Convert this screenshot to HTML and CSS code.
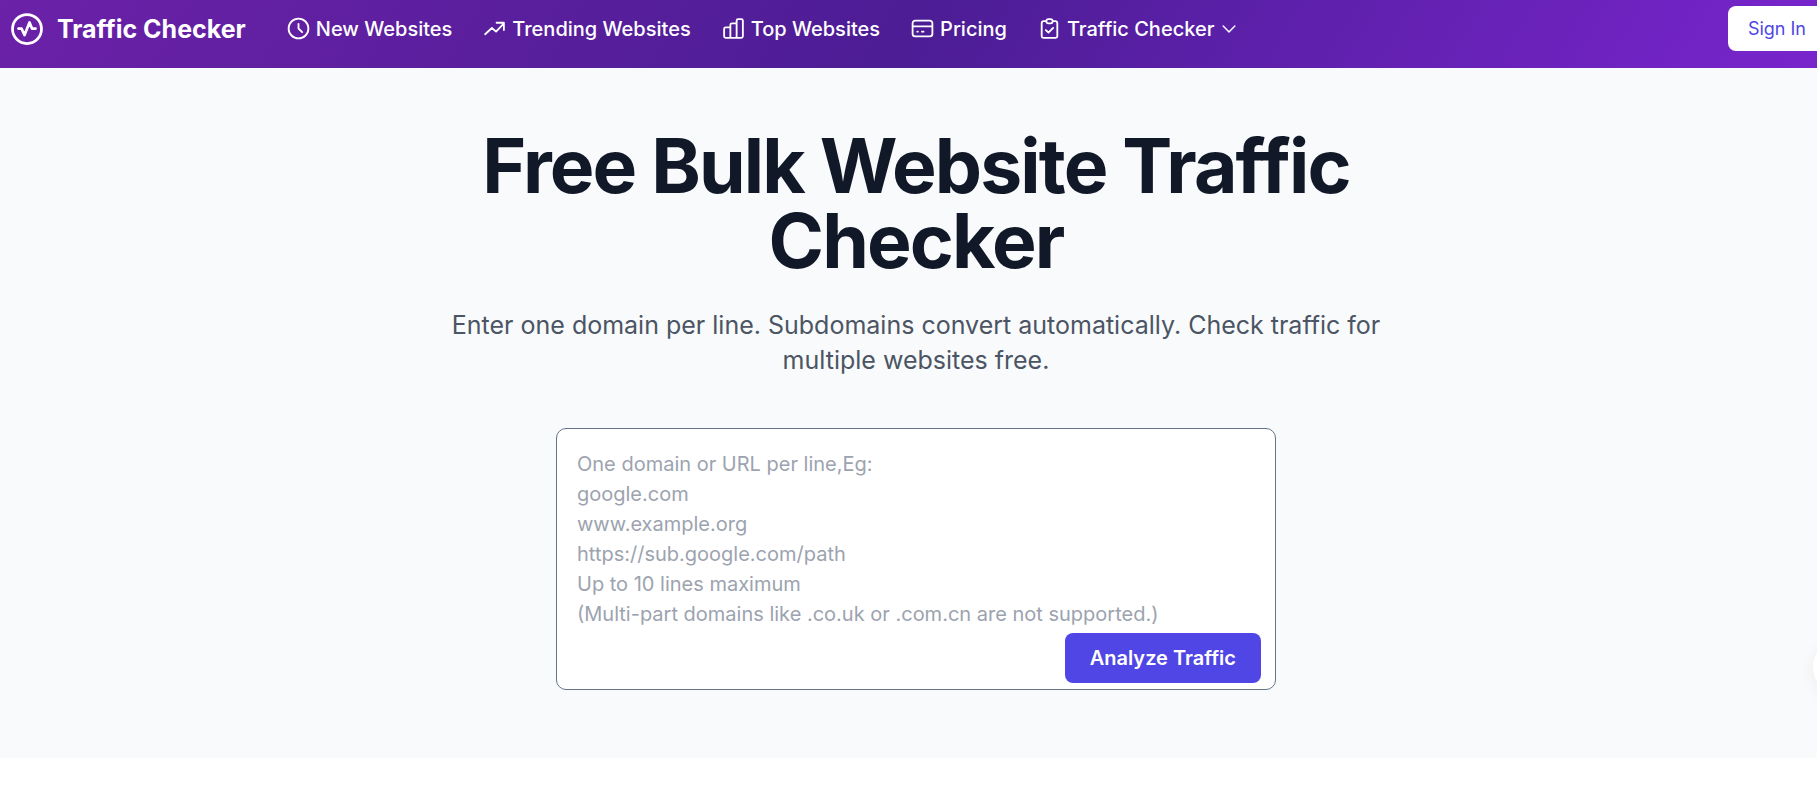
FILE: index.html
```html
<!DOCTYPE html>
<html lang="en">
<head>
<meta charset="utf-8">
<title>Traffic Checker</title>
<link rel="stylesheet" href="styles.css">
</head>
<body>
<header class="header">
  <a class="brand" href="#">
    <svg class="brand-icon" viewBox="0 0 40 40" fill="none" stroke="currentColor" stroke-width="2.75" stroke-linecap="round" stroke-linejoin="round" aria-hidden="true">
      <circle cx="20" cy="20" r="14.5"/>
      <path d="M11.500 19.500H14.500L17.500 26L22.500 13.500L25 19.500H28.500"/>
    </svg>
    <span>Traffic Checker</span>
  </a>
  <nav class="nav">
    <a class="nav-link" href="#">
      <svg class="icon" viewBox="0 0 24 24" aria-hidden="true"><path d="M12 7.500V12l3.500 3.500M21.500 12a9.500 9.500 0 1 1-19 0 9.500 9.500 0 0 1 19 0Z"/></svg>
      New Websites
    </a>
    <a class="nav-link" href="#">
      <svg class="icon" viewBox="0 0 24 24" aria-hidden="true"><path d="M3 17.500 9.500 11.500l4 3.500L21 7M14 6.500h7v7"/></svg>
      Trending Websites
    </a>
    <a class="nav-link" href="#">
      <svg class="icon" viewBox="0 0 24 24" aria-hidden="true"><path d="M9 21H4.500A1.500 1.500 0 0 1 3 19.500v-7A1.500 1.500 0 0 1 4.500 11H9M15 21H9V8.500A1.500 1.500 0 0 1 10.500 7H15M15 21V4.500A1.500 1.500 0 0 1 16.500 3h3A1.500 1.500 0 0 1 21 4.500v15a1.500 1.500 0 0 1-1.500 1.500Z"/></svg>
      Top Websites
    </a>
    <a class="nav-link" href="#">
      <svg class="icon" viewBox="0 0 24 24" aria-hidden="true"><path d="M5 4.500h14a2.500 2.500 0 0 1 2.500 2.500v10a2.500 2.500 0 0 1-2.500 2.500H5A2.500 2.500 0 0 1 2.500 17V7A2.500 2.500 0 0 1 5 4.500ZM2.500 10h19M7 15h.5M11.500 15h1.500"/></svg>
      Pricing
    </a>
    <a class="nav-link" href="#">
      <svg class="icon" viewBox="0 0 24 24" aria-hidden="true"><path d="M9 5H6.500A2 2 0 0 0 4.500 7v12.500a1.500 1.500 0 0 0 1.500 1.500h12a1.500 1.500 0 0 0 1.500-1.500V7a2 2 0 0 0-2-2H15M9 5a2 2 0 0 0 2 2h2a2 2 0 0 0 2-2M9 5a2 2 0 0 1 2-2h2a2 2 0 0 1 2 2M8.500 13.500l2.500 2.500 4.500-4.500"/></svg>
      Traffic Checker
      <svg class="chevron" viewBox="0 0 24 24" aria-hidden="true"><path d="m5 8.500 7 7 7-7"/></svg>
    </a>
  </nav>
  <a class="sign-in" href="#">Sign In</a>
</header>
<main class="hero">
  <h1 class="title">Free Bulk Website Traffic Checker</h1>
  <p class="subtitle">Enter one domain per line. Subdomains convert automatically. Check traffic for multiple websites free.</p>
  <form class="checker">
    <textarea class="domains" rows="7" aria-label="Domains" placeholder="One domain or URL per line,Eg:&#10;google.com&#10;www.example.org&#10;https://sub.google.com/path&#10;Up to 10 lines maximum&#10;(Multi-part domains like .co.uk or .com.cn are not supported.)"></textarea>
    <button class="analyze" type="button">Analyze Traffic</button>
  </form>
</main>
<button class="floating" type="button" aria-label="Open menu"></button>
</body>
</html>
```

FILE: styles.css
```css
* {
  box-sizing: border-box;
}

html {
  overflow: hidden;
}

body {
  margin: 0 -15px 0 0;
  background: #fff;
  font-family: Inter, "Liberation Sans", sans-serif;
  font-size: 20px;
  line-height: 30px;
}

.header {
  display: flex;
  align-items: center;
  padding: 6px 6px 17px 7px;
  background: linear-gradient(120deg, #6b21a8, #4c1d95 50%, #7925cd);
  color: #fff;
}

.brand {
  display: flex;
  align-items: center;
  gap: 10px;
  color: inherit;
  font-size: 25px;
  font-weight: 700;
  text-decoration: none;
}

.brand-icon {
  width: 40px;
  height: 40px;
}

.nav {
  display: flex;
  gap: 30px;
  margin-left: 40px;
}

.nav-link {
  display: flex;
  align-items: center;
  gap: 5px;
  color: inherit;
  font-weight: 500;
  text-decoration: none;
}

.icon,
.chevron {
  width: 25px;
  height: 25px;
  fill: none;
  stroke: currentColor;
  stroke-width: 1.75;
  stroke-linecap: round;
  stroke-linejoin: round;
}

.chevron {
  width: 20px;
  height: 20px;
}

.sign-in {
  margin-left: auto;
  padding: 10px 20px;
  border-radius: 8px;
  background: #fff;
  color: #4f46e5;
  font-size: 18px;
  line-height: 25px;
  text-decoration: none;
}

.hero {
  padding: 60px 30px 68px;
  background: #f9fafc;
  text-align: center;
}

.title {
  max-width: 960px;
  margin: 0 auto;
  color: #111827;
  font-size: 75px;
  font-weight: 700;
  line-height: 75px;
  letter-spacing: -0.025em;
}

.subtitle {
  max-width: 960px;
  margin: 30px auto 50px;
  color: #4b5563;
  font-size: 25px;
  line-height: 35px;
}

.checker {
  position: relative;
  max-width: 720px;
  margin: 0 auto;
}

.domains {
  display: block;
  width: 100%;
  padding: 20px 20px 30px;
  border: 1px solid #64748b;
  border-radius: 10px;
  background: #fff;
  color: #111827;
  font: inherit;
  resize: none;
}

.domains::placeholder {
  color: #9ca3af;
}

.analyze {
  position: absolute;
  right: 15px;
  bottom: 7px;
  padding: 10px 25px;
  border: 0;
  border-radius: 8px;
  background: #5046e5;
  color: #fff;
  font: inherit;
  font-weight: 600;
}

.floating {
  position: fixed;
  right: -56px;
  top: 637px;
  width: 60px;
  height: 60px;
  border: 0;
  border-radius: 50%;
  background: #fff;
  box-shadow: 0 4px 16px rgb(0 0 0 / 6%);
}
```
